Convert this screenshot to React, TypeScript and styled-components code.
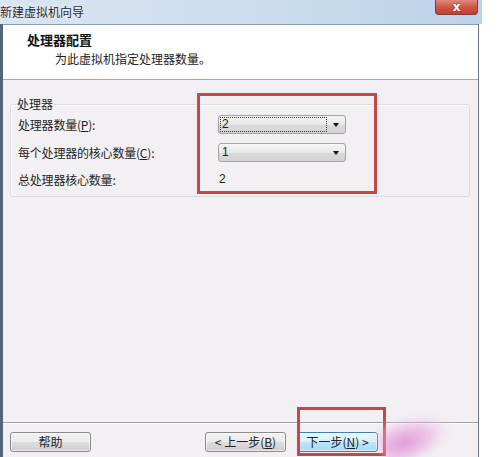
import * as React from "react";
import styled, { createGlobalStyle } from "styled-components";

const GlobalStyle = createGlobalStyle`
  html, body {
    margin: 0;
    padding: 0;
    background: #ffffff;
  }
  body {
    font-family: "Noto Sans CJK SC", "Liberation Sans", sans-serif;
    font-size: 12px;
    color: #1e1e1e;
  }
`;

/// Styles

const Page = styled.div`
  position: relative;
  width: 500px;
  height: 457px;
  overflow: hidden;
  background: #ffffff;
`;

const TitleBar = styled.div`
  display: flex;
  align-items: center;
  justify-content: space-between;
  width: 482px;
  height: 24px;
  background: linear-gradient(to right, #d9e5f1 0%, #cbdcee 55%, #bcd2ea 100%);
`;

const TitleText = styled.span`
  font-size: 12px;
  line-height: 24px;
  color: #2a2a2a;
  text-shadow: 0 0 4px #ffffff;
`;

const CloseButton = styled.div`
  display: flex;
  align-items: center;
  justify-content: center;
  align-self: flex-start;
  margin-right: 4px;
  width: 43px;
  height: 15px;
  box-sizing: border-box;
  border: 1px solid #8a3b33;
  border-top: none;
  border-radius: 0 0 4px 4px;
  background: linear-gradient(#e08a7d 0%, #cf5745 50%, #c0402f 100%);
  color: #ffffff;
  font-family: "DejaVu Sans", sans-serif;
  font-weight: bold;
  font-size: 12px;
  line-height: 1;
  text-shadow: 0 0 2px #7a2a20;
`;

const Frame = styled.div`
  display: flex;
  flex-direction: column;
  width: 479px;
  height: 433px;
  box-sizing: border-box;
  border-left: 3px solid #55667a;
  border-right: 1px solid #6c7682;
  background: #f2f0f2;
`;

const Header = styled.div`
  display: flex;
  flex-direction: column;
  height: 56px;
  box-sizing: border-box;
  padding: 6px 0 0 24px;
  background: #ffffff;
  border-top: 1px solid #8c9bab;
  border-bottom: 1px solid #a9a9a9;
`;

const HeaderTitle = styled.div`
  font-size: 13px;
  font-weight: bold;
  line-height: 18px;
  color: #111111;
`;

const HeaderSub = styled.div`
  margin-top: 2px;
  padding-left: 28px;
  font-size: 12px;
  line-height: 16px;
  color: #222222;
`;

const Body = styled.div`
  flex: 1;
  padding: 16px 8px 0 7px;
`;

const GroupBox = styled.fieldset`
  margin: 0;
  padding: 3px 7px 9px 7px;
  border: 1px solid #dcdbe0;
  border-radius: 3px;
  box-shadow: inset 1px 1px 0 #ffffff;
`;

const GroupLegend = styled.legend`
  padding: 0;
  margin-left: -1px;
  font-size: 12px;
  line-height: 16px;
`;

const Grid = styled.div`
  display: grid;
  grid-template-columns: 200px 128px;
  grid-template-rows: 19px 19px 16px;
  row-gap: 9px;
  align-items: center;
`;

const Label = styled.span`
  font-size: 12px;
  line-height: 19px;
  letter-spacing: -0.2px;
  white-space: nowrap;
`;

const Key = styled.span`
  text-decoration: underline;
`;

const Combo = styled.div`
  position: relative;
  display: flex;
  align-items: center;
  height: 19px;
  box-sizing: border-box;
  padding-left: 2px;
  border: 1px solid #a3a3a6;
  border-radius: 3px;
  background: linear-gradient(#f5f5f5 0%, #e8e8e8 50%, #dadada 51%, #d3d3d3 100%);
  font-family: "Liberation Sans", sans-serif;
  font-size: 12px;
`;

const ComboValue = styled.span<{ $focused?: boolean }>`
  width: 105px;
  height: 13px;
  line-height: 13px;
  padding-left: 1px;
  box-sizing: border-box;
  outline: ${p => (p.$focused ? "1px dotted #333333" : "none")};
`;

const Arrow = styled.span`
  position: absolute;
  right: 6px;
  top: 7px;
  width: 0;
  height: 0;
  border-left: 3px solid transparent;
  border-right: 3px solid transparent;
  border-top: 4px solid #111111;
`;

const StaticValue = styled.span`
  padding-left: 1px;
  font-family: "Liberation Sans", sans-serif;
  font-size: 12px;
`;

const Footer = styled.div`
  display: flex;
  align-items: flex-start;
  gap: 11px;
  height: 35px;
  box-sizing: border-box;
  padding: 9px 100px 0 7px;
  border-top: 1px solid #a0a0a0;
  box-shadow: inset 0 1px 0 #ffffff;
`;

const Spacer = styled.div`
  flex: 1;
`;

const Button = styled.div<{ $primary?: boolean }>`
  display: flex;
  align-items: center;
  justify-content: center;
  width: 81px;
  height: 20px;
  box-sizing: border-box;
  border: 1px solid ${p => (p.$primary ? "#3c7fb1" : "#8a8a8a")};
  border-radius: 3px;
  background: ${p =>
    p.$primary
      ? "linear-gradient(#eaf6fd 0%, #d9f0fc 50%, #bee6fd 51%, #a7d9f5 100%)"
      : "linear-gradient(#f2f2f2 0%, #ebebeb 50%, #dddddd 51%, #cfcfcf 100%)"};
  box-shadow: inset 0 0 0 1px rgba(255, 255, 255, 0.6);
  font-size: 12px;
  line-height: 16px;
  color: #222222;
  white-space: nowrap;
`;

const Annotation = styled.div`
  position: absolute;
  box-sizing: border-box;
  border: 3px solid #c7464a;
`;

const Smear = styled.div`
  position: absolute;
  left: 378px;
  top: 410px;
  width: 78px;
  height: 46px;
  background: radial-gradient(ellipse at 30% 60%, rgba(222, 130, 210, 0.8) 0%, rgba(232, 160, 222, 0.5) 35%, rgba(245, 215, 240, 0.25) 55%, rgba(255, 255, 255, 0) 75%);
  filter: blur(3px);
  transform: rotate(-20deg);
`;

/// Component

export default function App() {
  return (
    <Page>
      <GlobalStyle />
      <TitleBar>
        <TitleText>新建虚拟机向导</TitleText>
        <CloseButton>x</CloseButton>
      </TitleBar>
      <Frame>
        <Header>
          <HeaderTitle>处理器配置</HeaderTitle>
          <HeaderSub>为此虚拟机指定处理器数量。</HeaderSub>
        </Header>
        <Body>
          <GroupBox>
            <GroupLegend>处理器</GroupLegend>
            <Grid>
              <Label>
                处理器数量(<Key>P</Key>):
              </Label>
              <Combo>
                <ComboValue $focused>2</ComboValue>
                <Arrow />
              </Combo>
              <Label>
                每个处理器的核心数量(<Key>C</Key>):
              </Label>
              <Combo>
                <ComboValue>1</ComboValue>
                <Arrow />
              </Combo>
              <Label>总处理器核心数量:</Label>
              <StaticValue>2</StaticValue>
            </Grid>
          </GroupBox>
        </Body>
        <Footer>
          <Button>帮助</Button>
          <Spacer />
          <Button>
            &lt; 上一步(<Key>B</Key>)
          </Button>
          <Button $primary>
            下一步(<Key>N</Key>) &gt;
          </Button>
        </Footer>
      </Frame>
      <Annotation style={{ left: 197, top: 93, width: 180, height: 101 }} />
      <Annotation style={{ left: 297, top: 407, width: 89, height: 49 }} />
      <Smear />
    </Page>
  );
}
